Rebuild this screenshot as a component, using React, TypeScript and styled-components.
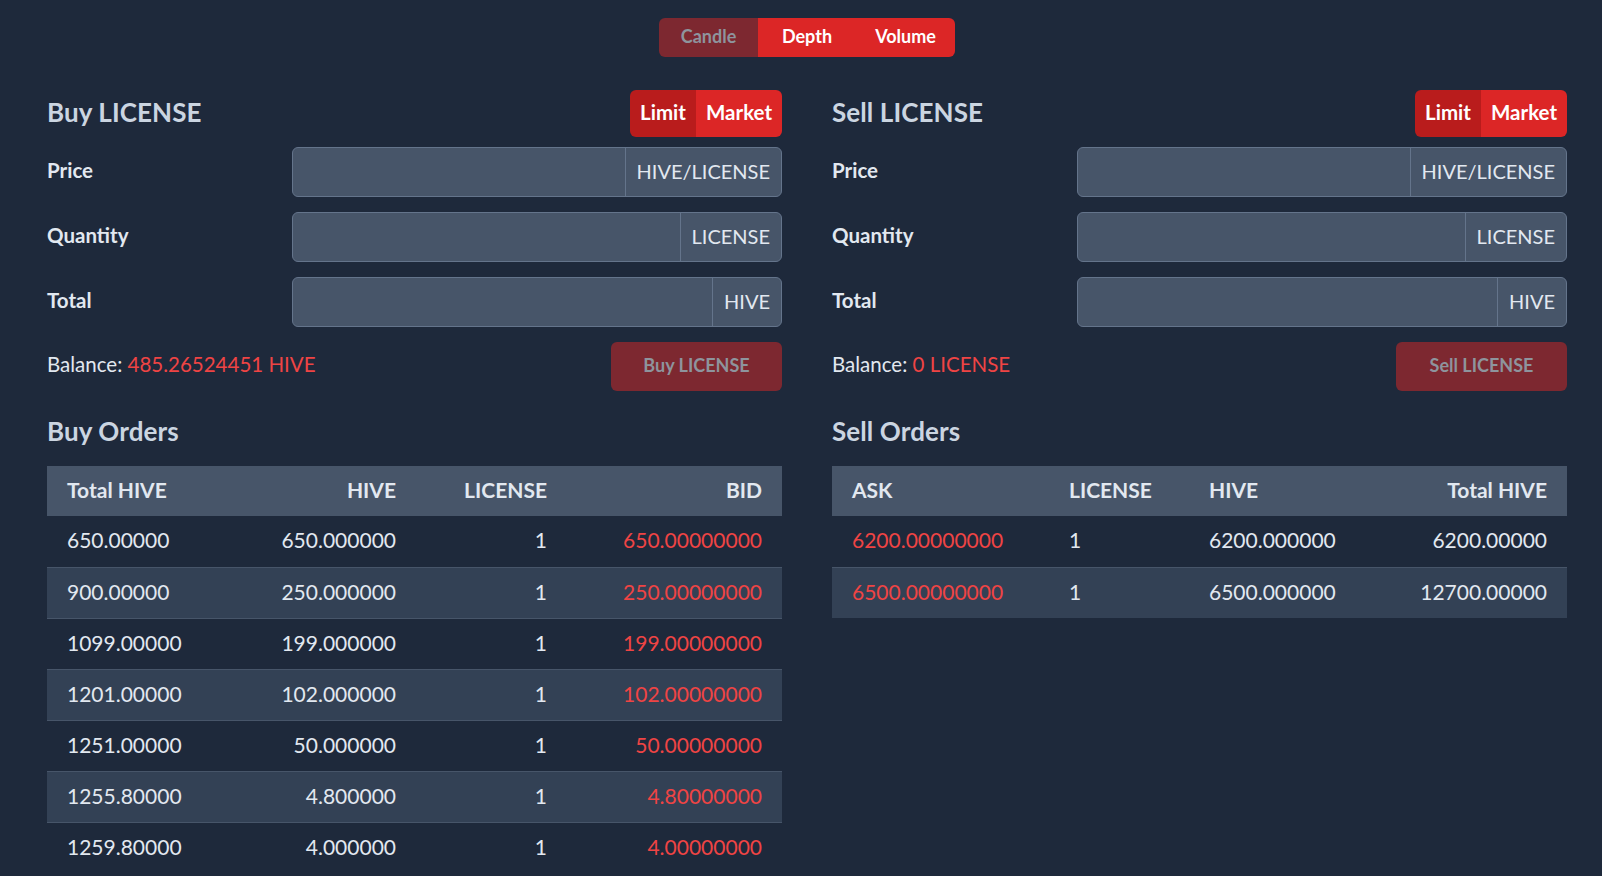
import React from "react";
import styled, { createGlobalStyle, css } from "styled-components";

const Global = createGlobalStyle`
  html, body { margin: 0; padding: 0; background: #1e293b; }
  body { font-family: Lato, "Noto Sans", sans-serif; color: #e2e8f0; }
  * { box-sizing: border-box; }
`;

const Page = styled.div`
  padding: 18px 35px 0 47px;
  min-height: 876px;
`;

const TopBar = styled.div`
  display: flex;
  justify-content: center;
  margin-bottom: 33px;
`;

const Group = styled.div`
  display: inline-flex;
  border-radius: 6px;
  overflow: hidden;
`;

const SegBtn = styled.button<{ $w: number; $tone: "dim" | "dark" | "red"; $h: number; $fs: number }>`
  width: ${(p) => p.$w}px;
  height: ${(p) => p.$h}px;
  border: none;
  font-family: inherit;
  font-weight: 700;
  font-size: ${(p) => p.$fs}px;
  color: #ffffff;
  padding: 0 0 3px;
  cursor: pointer;
  background: #dc2626;
  ${(p) =>
    p.$tone === "dim" &&
    css`
      background: #7d2830;
      color: #8e949d;
    `}
  ${(p) =>
    p.$tone === "dark" &&
    css`
      background: #b91c1c;
    `}
`;

const Columns = styled.div`
  display: grid;
  grid-template-columns: 735px 735px;
  column-gap: 50px;
`;

const Col = styled.div`
  display: flex;
  flex-direction: column;
`;

const HeadRow = styled.div`
  display: flex;
  justify-content: space-between;
  align-items: center;
  height: 47px;
  margin-bottom: 10px;
`;

const Title = styled.h2`
  margin: 0 0 3px;
  font-size: 26px;
  font-weight: 700;
  color: #cbd5e1;
  letter-spacing: 0.1px;
`;

const FormRow = styled.div`
  display: grid;
  grid-template-columns: 245px 1fr;
  align-items: center;
  height: 50px;
  margin-bottom: 15px;
`;

const Label = styled.label`
  font-size: 20.5px;
  font-weight: 700;
  color: #e2e8f0;
  padding-bottom: 4px;
`;

const InputGroup = styled.div`
  display: flex;
  height: 50px;
  border: 1px solid #64748b;
  border-radius: 6px;
  background: #475569;
  overflow: hidden;
`;

const Field = styled.input`
  flex: 1;
  min-width: 0;
  border: none;
  background: transparent;
  outline: none;
  color: #e2e8f0;
  font-family: inherit;
  font-size: 20px;
  padding: 0 14px;
`;

const Addon = styled.span`
  display: flex;
  align-items: center;
  padding: 0 11px 2px 11px;
  border-left: 1px solid #64748b;
  font-size: 20px;
  color: #e2e8f0;
`;

const BalanceRow = styled.div`
  display: flex;
  justify-content: space-between;
  align-items: center;
  height: 49px;
`;

const Balance = styled.div`
  font-size: 20.5px;
  color: #e2e8f0;
  padding-bottom: 6px;
`;

const Red = styled.span`
  color: #ef4444;
`;

const SubmitBtn = styled.button`
  width: 171px;
  height: 49px;
  border: none;
  border-radius: 6px;
  background: #7d2830;
  color: #8e949d;
  font-family: inherit;
  font-weight: 700;
  font-size: 18px;
  padding: 0 0 3px;
`;

const SectionTitle = styled(Title)`
  margin: 22px 0 17px;
  line-height: 36px;
`;

const Table = styled.table`
  width: 100%;
  border-collapse: collapse;
  table-layout: fixed;
  font-size: 21px;
`;

const Th = styled.th<{ $align?: string; $w: number }>`
  width: ${(p) => p.$w}px;
  height: 50px;
  padding: 0 20px 4px;
  background: #475569;
  text-align: ${(p) => p.$align || "left"};
  font-weight: 700;
  color: #e2e8f0;
`;

const Tr = styled.tr<{ $striped: boolean; $first: boolean }>`
  background: ${(p) => (p.$striped ? "#334155" : "transparent")};
  border-top: ${(p) => (p.$first ? "none" : "1px solid #475569")};
`;

const Td = styled.td<{ $align?: string; $red?: boolean }>`
  height: 51px;
  padding: 0 20px 3px;
  text-align: ${(p) => p.$align || "left"};
  color: ${(p) => (p.$red ? "#ef4444" : "#e2e8f0")};
  white-space: nowrap;
`;

type ColDef = { label: string; w: number; align: string; red?: boolean };

const buyCols: ColDef[] = [
  { label: "Total HIVE", w: 189, align: "left" },
  { label: "HIVE", w: 180, align: "right" },
  { label: "LICENSE", w: 151, align: "right" },
  { label: "BID", w: 215, align: "right", red: true },
];

const sellCols: ColDef[] = [
  { label: "ASK", w: 217, align: "left", red: true },
  { label: "LICENSE", w: 140, align: "left" },
  { label: "HIVE", w: 170, align: "left" },
  { label: "Total HIVE", w: 208, align: "right" },
];

const buyRows = [
  ["650.00000", "650.000000", "1", "650.00000000"],
  ["900.00000", "250.000000", "1", "250.00000000"],
  ["1099.00000", "199.000000", "1", "199.00000000"],
  ["1201.00000", "102.000000", "1", "102.00000000"],
  ["1251.00000", "50.000000", "1", "50.00000000"],
  ["1255.80000", "4.800000", "1", "4.80000000"],
  ["1259.80000", "4.000000", "1", "4.00000000"],
];

const sellRows = [
  ["6200.00000000", "1", "6200.000000", "6200.00000"],
  ["6500.00000000", "1", "6500.000000", "12700.00000"],
];

function OrderTable({ cols, rows }: { cols: ColDef[]; rows: string[][] }) {
  return (
    <Table>
      <thead>
        <tr>
          {cols.map((c) => (
            <Th key={c.label} $w={c.w} $align={c.align}>
              {c.label}
            </Th>
          ))}
        </tr>
      </thead>
      <tbody>
        {rows.map((r, i) => (
          <Tr key={i} $striped={i % 2 === 1} $first={i === 0}>
            {r.map((v, j) => (
              <Td key={j} $align={cols[j].align} $red={cols[j].red}>
                {v}
              </Td>
            ))}
          </Tr>
        ))}
      </tbody>
    </Table>
  );
}

function TradePanel({
  side,
  balance,
  rows,
  cols,
}: {
  side: "Buy" | "Sell";
  balance: string;
  rows: string[][];
  cols: ColDef[];
}) {
  return (
    <Col>
      <HeadRow>
        <Title>{side} LICENSE</Title>
        <Group>
          <SegBtn $w={66} $h={47} $fs={20.5} $tone="dark">Limit</SegBtn>
          <SegBtn $w={86} $h={47} $fs={20.5} $tone="red">Market</SegBtn>
        </Group>
      </HeadRow>
      <FormRow>
        <Label>Price</Label>
        <InputGroup>
          <Field />
          <Addon>HIVE/LICENSE</Addon>
        </InputGroup>
      </FormRow>
      <FormRow>
        <Label>Quantity</Label>
        <InputGroup>
          <Field />
          <Addon>LICENSE</Addon>
        </InputGroup>
      </FormRow>
      <FormRow>
        <Label>Total</Label>
        <InputGroup>
          <Field />
          <Addon>HIVE</Addon>
        </InputGroup>
      </FormRow>
      <BalanceRow>
        <Balance>
          Balance: <Red>{balance}</Red>
        </Balance>
        <SubmitBtn>{side} LICENSE</SubmitBtn>
      </BalanceRow>
      <SectionTitle>{side} Orders</SectionTitle>
      <OrderTable cols={cols} rows={rows} />
    </Col>
  );
}

export default function App() {
  return (
    <Page>
      <Global />
      <TopBar>
        <Group>
          <SegBtn $w={99} $h={39} $fs={18} $tone="dim">Candle</SegBtn>
          <SegBtn $w={98} $h={39} $fs={18} $tone="red">Depth</SegBtn>
          <SegBtn $w={99} $h={39} $fs={18} $tone="red">Volume</SegBtn>
        </Group>
      </TopBar>
      <Columns>
        <TradePanel side="Buy" balance="485.26524451 HIVE" rows={buyRows} cols={buyCols} />
        <TradePanel side="Sell" balance="0 LICENSE" rows={sellRows} cols={sellCols} />
      </Columns>
    </Page>
  );
}
